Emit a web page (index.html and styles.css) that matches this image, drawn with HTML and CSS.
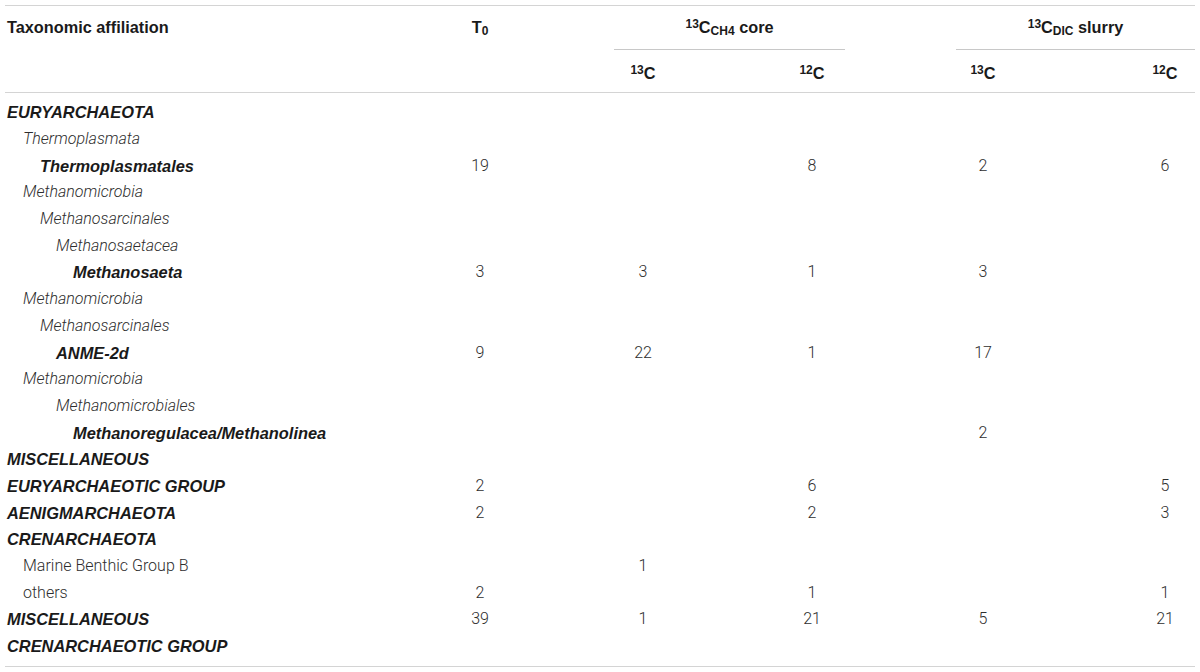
FILE: index.html
```html
<!DOCTYPE html>
<html>
<head>
<meta charset="utf-8">
<link rel="stylesheet" href="styles.css">
</head>
<body>
<table class="tbl">
  <colgroup>
    <col class="c-label">
    <col class="c-t0">
    <col class="c-a">
    <col class="c-b">
    <col class="c-c">
    <col class="c-d">
  </colgroup>
  <thead>
    <tr class="h1">
      <th class="lab" rowspan="2">Taxonomic affiliation</th>
      <th class="num top" rowspan="2">T<sub>0</sub></th>
      <th class="grp" colspan="2"><div class="grp-in core"><sup>13</sup>C<sub>CH4</sub> core</div></th>
      <th class="grp" colspan="2"><div class="grp-in slurry"><sup>13</sup>C<sub>DIC</sub> slurry</div></th>
    </tr>
    <tr class="h2">
      <th class="num"><sup>13</sup>C</th>
      <th class="num"><sup>12</sup>C</th>
      <th class="num"><sup>13</sup>C</th>
      <th class="num last"><sup>12</sup>C</th>
    </tr>
  </thead>
  <tbody>
    <tr class="first"><td class="lab l0 bi">EURYARCHAEOTA</td><td></td><td></td><td></td><td></td><td class="last"></td></tr>
    <tr><td class="lab l1 it">Thermoplasmata</td><td></td><td></td><td></td><td></td><td class="last"></td></tr>
    <tr><td class="lab l2 bi">Thermoplasmatales</td><td>19</td><td></td><td>8</td><td>2</td><td class="last">6</td></tr>
    <tr><td class="lab l1 it">Methanomicrobia</td><td></td><td></td><td></td><td></td><td class="last"></td></tr>
    <tr><td class="lab l2 it">Methanosarcinales</td><td></td><td></td><td></td><td></td><td class="last"></td></tr>
    <tr><td class="lab l3 it">Methanosaetacea</td><td></td><td></td><td></td><td></td><td class="last"></td></tr>
    <tr><td class="lab l4 bi">Methanosaeta</td><td>3</td><td>3</td><td>1</td><td>3</td><td class="last"></td></tr>
    <tr><td class="lab l1 it">Methanomicrobia</td><td></td><td></td><td></td><td></td><td class="last"></td></tr>
    <tr><td class="lab l2 it">Methanosarcinales</td><td></td><td></td><td></td><td></td><td class="last"></td></tr>
    <tr><td class="lab l3 bi">ANME-2d</td><td>9</td><td>22</td><td>1</td><td>17</td><td class="last"></td></tr>
    <tr><td class="lab l1 it">Methanomicrobia</td><td></td><td></td><td></td><td></td><td class="last"></td></tr>
    <tr><td class="lab l3 it">Methanomicrobiales</td><td></td><td></td><td></td><td></td><td class="last"></td></tr>
    <tr><td class="lab l4 bi">Methanoregulacea/Methanolinea</td><td></td><td></td><td></td><td>2</td><td class="last"></td></tr>
    <tr><td class="lab l0 bi">MISCELLANEOUS</td><td></td><td></td><td></td><td></td><td class="last"></td></tr>
    <tr><td class="lab l0 bi">EURYARCHAEOTIC GROUP</td><td>2</td><td></td><td>6</td><td></td><td class="last">5</td></tr>
    <tr><td class="lab l0 bi">AENIGMARCHAEOTA</td><td>2</td><td></td><td>2</td><td></td><td class="last">3</td></tr>
    <tr><td class="lab l0 bi">CRENARCHAEOTA</td><td></td><td></td><td></td><td></td><td class="last"></td></tr>
    <tr><td class="lab l1">Marine Benthic Group B</td><td></td><td>1</td><td></td><td></td><td class="last"></td></tr>
    <tr><td class="lab l1">others</td><td>2</td><td></td><td>1</td><td></td><td class="last">1</td></tr>
    <tr><td class="lab l0 bi">MISCELLANEOUS</td><td>39</td><td>1</td><td>21</td><td>5</td><td class="last">21</td></tr>
    <tr class="final"><td class="lab l0 bi">CRENARCHAEOTIC GROUP</td><td></td><td></td><td></td><td></td><td class="last"></td></tr>
  </tbody>
</table>
</body>
</html>
```

FILE: styles.css
```css
html, body {
  margin: 0;
  padding: 0;
  background: #ffffff;
}

body {
  padding: 5px 5px 0 5px;
  font-family: "Liberation Sans", Arial, Helvetica, sans-serif;
  font-size: 16.3px;
  color: #2a2a2a;
}

.tbl {
  width: 1190px;
  border-collapse: collapse;
  table-layout: fixed;
  border-top: 1px solid #d4d4d4;
  border-bottom: 1px solid #d4d4d4;
}

.c-label { width: 395px; }
.c-t0 { width: 160px; }
.c-a { width: 166px; }
.c-b { width: 172px; }
.c-c { width: 170px; }
.c-d { width: 127px; }

th, td {
  padding: 0;
  text-align: center;
  vertical-align: middle;
}

th {
  font-weight: bold;
  color: #1a1a1a;
  line-height: 18px;
}

thead .h2 th {
  height: 38px;
  padding-top: 4px;
}

thead tr.h2 {
  border-bottom: 1px solid #d4d4d4;
}

th.lab {
  text-align: left;
  vertical-align: top;
  padding: 12px 0 0 2px;
}

th.top {
  vertical-align: top;
  padding-top: 12px;
}

th.grp {
  vertical-align: top;
  padding-top: 12px;
}

.grp-in {
  padding-bottom: 13px;
  border-bottom: 1px solid #c8c8c8;
}

.grp-in.core {
  margin: 0 53px 0 54px;
}

.grp-in.slurry {
  margin: 0 0 0 58px;
}

sup, sub {
  font-size: 12px;
  line-height: 0;
  position: relative;
  vertical-align: baseline;
}

sup { top: -5px; }
sub { top: 2px; }

td {
  height: 26.7px;
  line-height: 18px;
  font-family: "Roboto", "Liberation Sans", Arial, sans-serif;
  font-size: 16px;
  font-weight: 300;
  color: #2e2e2e;
}

.last {
  padding-left: 67px;
}

tbody tr.first td {
  padding-top: 6px;
}

tbody tr.final td {
  padding-bottom: 7px;
}

td.lab {
  text-align: left;
}

.l0 { padding-left: 2px; }
.l1 { padding-left: 18px; }
.l2 { padding-left: 35px; }
.l3 { padding-left: 51px; }
.l4 { padding-left: 68px; }

td.bi {
  font-family: "Liberation Sans", Arial, Helvetica, sans-serif;
  font-size: 16.4px;
  font-weight: bold;
  font-style: italic;
  color: #1a1a1a;
}

.it {
  font-style: italic;
}
```
